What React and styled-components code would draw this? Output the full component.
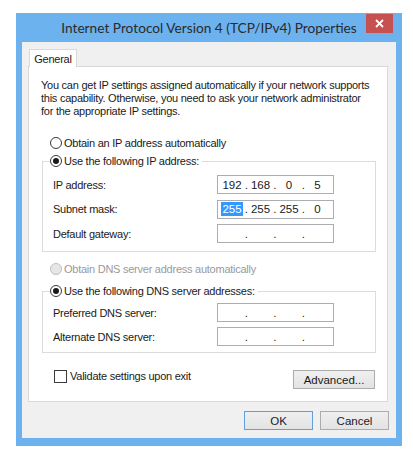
import React from "react";
import styled, { createGlobalStyle } from "styled-components";

const GlobalStyle = createGlobalStyle`
  html, body {
    margin: 0;
    padding: 0;
    background: #ffffff;
  }
  body {
    width: 413px;
    height: 475px;
    overflow: hidden;
    font-family: "Liberation Sans", Arial, sans-serif;
    font-size: 11px;
    letter-spacing: -0.25px;
    color: #1a1a1a;
  }
`;

const Window = styled.div`
  margin: 13px 0 0 16px;
  width: 386px;
  height: 433px;
  box-sizing: border-box;
  padding: 0 6px 8px 6px;
  background: #6cb2ee;
  display: flex;
  flex-direction: column;
`;

const TitleBar = styled.div`
  position: relative;
  height: 29px;
  flex-shrink: 0;
  display: flex;
  align-items: center;
  justify-content: center;
  font-family: Lato, "Open Sans", sans-serif;
  font-size: 13.7px;
  letter-spacing: 0;
  color: #2b2b2b;
  white-space: nowrap;
`;

const CloseButton = styled.div`
  position: absolute;
  top: 1px;
  right: 3px;
  width: 27px;
  height: 19px;
  background: #c75050;
  display: flex;
  align-items: center;
  justify-content: center;
`;

const Client = styled.div`
  flex: 1;
  background: #f0f0f0;
  padding: 7px 8px 0 6px;
  display: flex;
  flex-direction: column;
`;

const TabStrip = styled.div`
  display: flex;
  padding-left: 1px;
`;

const Tab = styled.div`
  position: relative;
  z-index: 1;
  width: 48px;
  height: 18px;
  box-sizing: border-box;
  margin-bottom: -1px;
  border: 1px solid #d9d9d9;
  border-bottom: none;
  background: #ffffff;
  display: flex;
  align-items: center;
  justify-content: center;
  padding-top: 1px;
`;

const Panel = styled.div`
  height: 336px;
  box-sizing: border-box;
  border: 1px solid #d9d9d9;
  background: #ffffff;
  padding: 12px 11px 0 12px;
  display: flex;
  flex-direction: column;
`;

const Description = styled.div`
  line-height: 13px;
  white-space: nowrap;
`;

const RadioRow = styled.div`
  display: flex;
  align-items: center;
  height: 16px;
  margin: ${(p) => p.$margin || "0"};
  color: ${(p) => (p.$disabled ? "#9a9a9a" : "#1a1a1a")};
  white-space: nowrap;
`;

const RadioCircle = styled.span`
  width: 12px;
  height: 12px;
  box-sizing: border-box;
  border-radius: 50%;
  border: 1px solid ${(p) => (p.$disabled ? "#bdbdbd" : "#3a3a3a")};
  background: ${(p) => (p.$disabled ? "#e6e6e6" : "#ffffff")};
  margin-right: 2px;
  display: flex;
  align-items: center;
  justify-content: center;
  flex-shrink: 0;

  &::after {
    content: "";
    display: ${(p) => (p.$checked ? "block" : "none")};
    width: 6px;
    height: 6px;
    border-radius: 50%;
    background: #1a1a1a;
  }
`;

const Group = styled.fieldset`
  margin: ${(p) => p.$margin};
  padding: ${(p) => p.$padTop} 0 ${(p) => p.$padBottom} 7px;
  border: 1px solid #dcdcdc;
  min-width: 0;
`;

const Legend = styled.legend`
  padding: 0 3px 0 0;
`;

const Rows = styled.div`
  display: flex;
  flex-direction: column;
  gap: ${(p) => p.$gap};
  padding-left: 3px;
`;

const FieldRow = styled.div`
  display: grid;
  grid-template-columns: 164px 117px;
  align-items: center;
  height: 19px;
`;

const IpBox = styled.div`
  height: 19px;
  box-sizing: border-box;
  border: 1px solid #abadb3;
  background: #ffffff;
  display: flex;
  align-items: center;
  padding-left: 2px;
  font-size: 11.5px;
  letter-spacing: 0;
`;

const Octet = styled.span`
  width: 24px;
  text-align: center;
`;

const Selected = styled.span`
  background: #3399ff;
  color: #ffffff;
  padding: 1px 1px;
`;

const Dot = styled.span`
  width: 4.5px;
  text-align: center;
`;

const BottomRow = styled.div`
  display: flex;
  justify-content: space-between;
  align-items: flex-start;
  margin-top: 15px;
`;

const CheckLabel = styled.div`
  display: flex;
  align-items: center;
  height: 14px;
  margin: 1px 0 0 13px;
`;

const CheckBox = styled.span`
  width: 13px;
  height: 13px;
  box-sizing: border-box;
  border: 1px solid #3a3a3a;
  background: #ffffff;
  margin-right: 3px;
`;

const Button = styled.div`
  width: ${(p) => p.$width || "69px"};
  height: 19px;
  box-sizing: border-box;
  border: 1px solid ${(p) => (p.$default ? "#5fa0e0" : "#acacac")};
  background: linear-gradient(#efefef, #e3e3e3);
  display: flex;
  align-items: center;
  justify-content: center;
  font-size: 11.5px;
  letter-spacing: 0;
  margin: ${(p) => p.$margin || "0"};
`;

const ButtonBar = styled.div`
  display: flex;
  justify-content: flex-end;
  gap: 7px;
  margin-top: 9px;
  margin-right: -1px;
`;

function Radio({ checked, disabled, children, margin }) {
  return (
    <RadioRow $disabled={disabled} $margin={margin}>
      <RadioCircle $checked={checked} $disabled={disabled} />
      {children}
    </RadioRow>
  );
}

function IpField({ octets = ["", "", "", ""], selectFirst }) {
  const parts = [];
  octets.forEach((o, i) => {
    if (i > 0) parts.push(<Dot key={"d" + i}>.</Dot>);
    parts.push(
      <Octet key={"o" + i}>
        {i === 0 && selectFirst ? <Selected>{o}</Selected> : o}
      </Octet>
    );
  });
  return <IpBox>{parts}</IpBox>;
}

export default function App() {
  return (
    <>
      <GlobalStyle />
      <Window>
        <TitleBar>
          Internet Protocol Version 4 (TCP/IPv4) Properties
          <CloseButton>
            <svg width="9" height="9" viewBox="0 0 9 9">
              <path d="M1 1 L8 8 M8 1 L1 8" stroke="#fff" strokeWidth="1.8" />
            </svg>
          </CloseButton>
        </TitleBar>
        <Client>
          <TabStrip>
            <Tab>General</Tab>
          </TabStrip>
          <Panel>
            <Description>
              You can get IP settings assigned automatically if your network supports
              <br />
              this capability. Otherwise, you need to ask your network administrator
              <br />
              for the appropriate IP settings.
            </Description>
            <Radio margin="17px 0 0 9px">Obtain an IP address automatically</Radio>
            <Group $margin="2px 0 0 1px" $padTop="6px" $padBottom="8px">
              <Legend>
                <Radio checked>Use the following IP address:</Radio>
              </Legend>
              <Rows $gap="5.5px">
                <FieldRow>
                  <span>IP address:</span>
                  <IpField octets={["192", "168", "0", "5"]} />
                </FieldRow>
                <FieldRow>
                  <span>Subnet mask:</span>
                  <IpField octets={["255", "255", "255", "0"]} selectFirst />
                </FieldRow>
                <FieldRow>
                  <span>Default gateway:</span>
                  <IpField />
                </FieldRow>
              </Rows>
            </Group>
            <Radio disabled margin="9px 0 0 9px">
              Obtain DNS server address automatically
            </Radio>
            <Group $margin="6px 0 0 1px" $padTop="4px" $padBottom="6px">
              <Legend>
                <Radio checked>Use the following DNS server addresses:</Radio>
              </Legend>
              <Rows $gap="5px">
                <FieldRow>
                  <span>Preferred DNS server:</span>
                  <IpField />
                </FieldRow>
                <FieldRow>
                  <span>Alternate DNS server:</span>
                  <IpField />
                </FieldRow>
              </Rows>
            </Group>
            <BottomRow>
              <CheckLabel>
                <CheckBox />
                Validate settings upon exit
              </CheckLabel>
              <Button $width="82px" $margin="2px 1px 0 0">
                Advanced...
              </Button>
            </BottomRow>
          </Panel>
          <ButtonBar>
            <Button $default>OK</Button>
            <Button>Cancel</Button>
          </ButtonBar>
        </Client>
      </Window>
    </>
  );
}
